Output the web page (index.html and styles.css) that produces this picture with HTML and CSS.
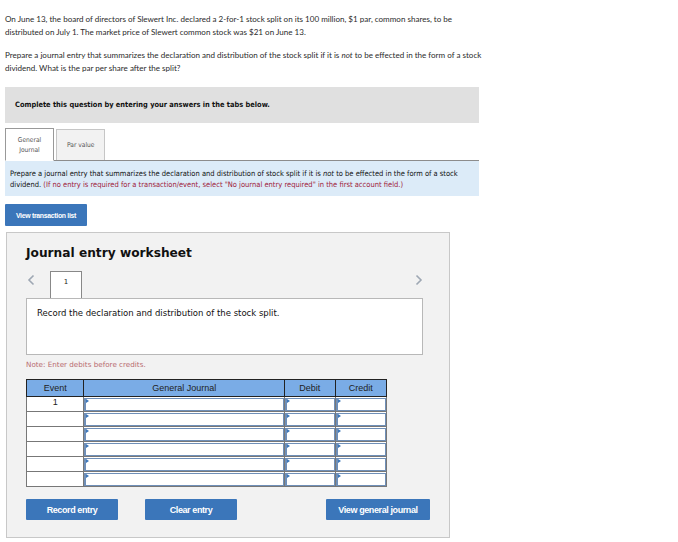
FILE: index.html
```html
<!DOCTYPE html>
<html lang="en">
<head>
    <meta charset="UTF-8">
    <title>Stock Split</title>
    <link rel="stylesheet" href="styles.css">
</head>
<body>
    <div class="question">
        <p class="intro">On June 13, the board of directors of Slewert Inc. declared a 2-for-1 stock split on its 100 million, $1 par, common shares, to be distributed on July 1. The market price of Slewert common stock was $21 on June 13.</p>
        <p class="intro">Prepare a journal entry that summarizes the declaration and distribution of the stock split if it is <em>not</em> to be effected in the form of a stock dividend. What is the par per share after the split?</p>

        <div class="banner">Complete this question by entering your answers in the tabs below.</div>

        <div class="tabs">
            <div class="tab active">General<br>Journal</div>
            <div class="tab">Par value</div>
        </div>

        <div class="instructions">
            Prepare a journal entry that summarizes the declaration and distribution of stock split if it is <em>not</em> to be effected in the form of a stock dividend. <span class="hint">(If no entry is required for a transaction/event, select "No journal entry required" in the first account field.)</span>
        </div>

        <button class="btn btn-list">View transaction list</button>

        <div class="worksheet">
            <h2>Journal entry worksheet</h2>
            <div class="pager">
                <svg class="arrow" width="8" height="12" viewBox="0 0 8 12"><polyline points="6.5,1.5 2,6 6.5,10.5" fill="none" stroke="#9ea7b3" stroke-width="1.6"/></svg>
                <div class="page-tab">1</div>
                <svg class="arrow next" width="8" height="12" viewBox="0 0 8 12"><polyline points="1.5,1.5 6,6 1.5,10.5" fill="none" stroke="#9ea7b3" stroke-width="1.6"/></svg>
            </div>
            <div class="record-box">Record the declaration and distribution of the stock split.</div>
            <div class="note">Note: Enter debits before credits.</div>

            <table class="journal">
                <thead>
                    <tr>
                        <th class="col-event">Event</th>
                        <th class="col-account">General Journal</th>
                        <th class="col-debit">Debit</th>
                        <th class="col-credit">Credit</th>
                    </tr>
                </thead>
                <tbody>
                    <tr><td class="event">1</td><td><div class="field"></div></td><td><div class="field"></div></td><td><div class="field"></div></td></tr>
                    <tr><td class="event"></td><td><div class="field"></div></td><td><div class="field"></div></td><td><div class="field"></div></td></tr>
                    <tr><td class="event"></td><td><div class="field"></div></td><td><div class="field"></div></td><td><div class="field"></div></td></tr>
                    <tr><td class="event"></td><td><div class="field"></div></td><td><div class="field"></div></td><td><div class="field"></div></td></tr>
                    <tr><td class="event"></td><td><div class="field"></div></td><td><div class="field"></div></td><td><div class="field"></div></td></tr>
                    <tr><td class="event"></td><td><div class="field"></div></td><td><div class="field"></div></td><td><div class="field"></div></td></tr>
                </tbody>
            </table>

            <div class="actions">
                <button class="btn">Record entry</button>
                <button class="btn">Clear entry</button>
                <button class="btn btn-wide">View general journal</button>
            </div>
        </div>
    </div>
</body>
</html>
```

FILE: styles.css
```css
body {
    margin: 0;
    background: #fff;
    color: #222;
    font-family: "Liberation Sans", Arial, sans-serif;
}

.question {
    padding: 13px 5px 0 5px;
}

.intro {
    width: 484px;
    margin: 0 0 10px 0;
    font-family: Lato, "Liberation Sans", sans-serif;
    font-size: 8.05px;
    line-height: 13px;
    color: #2b2b2b;
}

.banner {
    width: 464px;
    height: 36px;
    margin-top: 12px;
    padding-left: 10px;
    background-color: #e0e0e0;
    font-family: "DejaVu Sans Condensed", "DejaVu Sans", sans-serif;
    font-size: 7.4px;
    font-weight: bold;
    line-height: 36px;
    color: #111;
}

.tabs {
    display: flex;
    gap: 2px;
    width: 474px;
    margin-top: 5px;
    border-bottom: 1px solid #8c8c8c;
}

.tab {
    display: flex;
    align-items: center;
    justify-content: center;
    height: 30px;
    padding: 0 10px;
    margin-top: 1px;
    margin-bottom: -1px;
    background-color: #f2f2f2;
    border: 1px solid #c6c6c6;
    border-bottom: none;
    font-family: "DejaVu Sans Condensed", "DejaVu Sans", sans-serif;
    font-size: 6.6px;
    line-height: 10px;
    text-align: center;
    color: #555;
}

.tab.active {
    width: 27px;
    height: 31px;
    margin-top: 0;
    background-color: #fff;
    border-color: #999;
    border-bottom: 1px solid #fff;
}

.instructions {
    width: 464px;
    padding: 7px 5px 6px 5px;
    background-color: #dcebf8;
    font-family: "DejaVu Sans Condensed", "DejaVu Sans", sans-serif;
    font-size: 7.5px;
    line-height: 11px;
    color: #111;
}

.hint {
    color: #9e1b3b;
}

.btn {
    height: 21px;
    padding: 0 10px;
    background-color: #3b76ba;
    color: #fff;
    border: none;
    border-radius: 1px;
    font-family: "Liberation Sans", Arial, sans-serif;
    font-size: 9px;
    font-weight: bold;
    letter-spacing: -0.4px;
}

.btn-list {
    display: block;
    width: 82px;
    height: 22px;
    margin-top: 8px;
    padding: 0;
    font-size: 6.9px;
    letter-spacing: -0.3px;
}

.worksheet {
    width: 444px;
    height: 306px;
    margin-top: 6px;
    margin-left: 1px;
    background-color: #f2f2f2;
    border: 1px solid #c8c8c8;
    padding: 0 0 0 19px;
    box-sizing: border-box;
}

.worksheet h2 {
    margin: 12px 0 0 0;
    font-family: "DejaVu Sans", Verdana, sans-serif;
    font-size: 12.2px;
    line-height: 16px;
    color: #111;
}

.pager {
    display: flex;
    align-items: flex-start;
    width: 397px;
    height: 27px;
    margin-top: 10px;
}

.arrow {
    display: block;
    margin: 3px 15px 0 1px;
}

.arrow.next {
    margin: 3px 0 0 auto;
}

.page-tab {
    width: 32px;
    height: 27px;
    box-sizing: border-box;
    margin-bottom: -1px;
    background-color: #fff;
    border: 1px solid #888;
    border-bottom: none;
    font-family: "DejaVu Sans", Verdana, sans-serif;
    font-size: 7px;
    line-height: 20px;
    text-align: center;
    color: #222;
    position: relative;
    z-index: 1;
}

.record-box {
    width: 397px;
    height: 57px;
    box-sizing: border-box;
    padding: 8px 10px;
    background-color: #fff;
    border: 1px solid #b8b8b8;
    font-family: "DejaVu Sans", Verdana, sans-serif;
    font-size: 8.5px;
    line-height: 12px;
    color: #111;
}

.note {
    margin-top: 5px;
    font-family: "DejaVu Sans", Verdana, sans-serif;
    font-size: 7.2px;
    line-height: 10px;
    color: #b86a70;
}

.journal {
    width: 361px;
    margin-top: 9px;
    border-collapse: collapse;
    border: 1px solid #6b6b6b;
    font-family: "Liberation Sans", Arial, sans-serif;
}

.journal th {
    height: 16px;
    padding: 0;
    background-color: #7aace6;
    border: 1px solid #222;
    font-size: 9px;
    font-weight: normal;
    color: #222;
}

.col-event { width: 57px; }
.col-account { width: 203px; }
.col-debit { width: 50px; }
.col-credit { width: 51px; }

.journal td {
    height: 14px;
    padding: 0;
    border: 1px solid #777;
    background-color: #fff;
}

.journal td.event {
    font-size: 9px;
    text-align: center;
    vertical-align: top;
    line-height: 11px;
    color: #222;
}

.field {
    position: relative;
    height: 11px;
    border: 1px solid #6f8fb8;
    border-left-width: 2px;
    background-color: #fff;
}

.field::before {
    content: "";
    position: absolute;
    top: 0;
    left: 0;
    border-top: 2px solid transparent;
    border-bottom: 2px solid transparent;
    border-left: 3px solid #3b76ba;
}

.actions {
    display: flex;
    width: 404px;
    margin-top: 12px;
}

.actions .btn {
    width: 92px;
    padding: 0;
}

.actions .btn + .btn {
    margin-left: 27px;
}

.actions .btn-wide {
    width: 104px;
    margin-left: auto !important;
}
```
